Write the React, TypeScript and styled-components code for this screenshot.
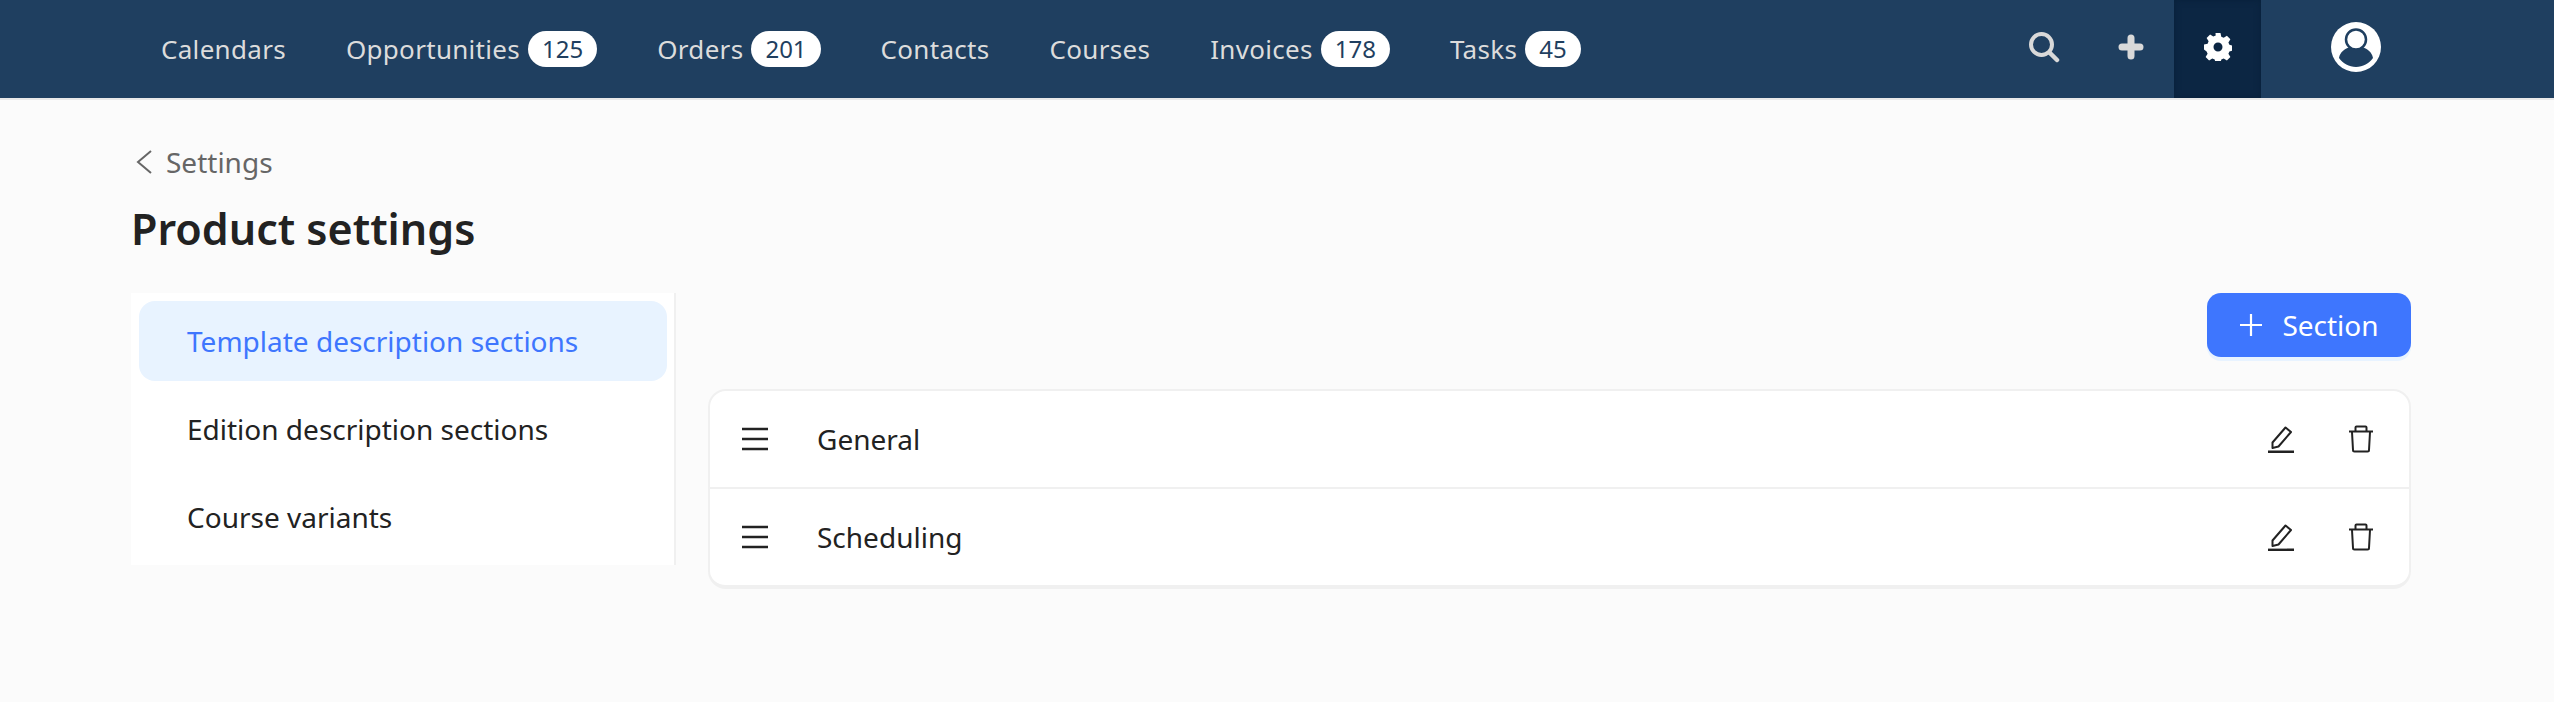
import React from "react";
import styled, { createGlobalStyle } from "styled-components";

const Global = createGlobalStyle`
  html, body { margin: 0; padding: 0; background: #fbfbfb; }
  body { font-family: "Noto Sans", "Open Sans", sans-serif; color: #222; }
`;

const TopBar = styled.header`
  height: 98px;
  background: #1f3f60;
  border-bottom: 2px solid #e9e9e9;
  display: flex;
  align-items: stretch;
  padding-left: 161px;
`;
const NavList = styled.nav`
  display: flex;
  align-items: center;
  gap: 60px;
  flex: 1;
`;
const NavItem = styled.a`
  display: flex;
  align-items: center;
  gap: 8px;
  color: #dcdcdc;
  font-size: 26px;
  letter-spacing: 0.3px;
  white-space: nowrap;
`;
const Badge = styled.span`
  height: 36px;
  padding: 0 14px;
  border-radius: 18px;
  background: #fff;
  color: #1f3f60;
  font-size: 24px;
  letter-spacing: 0;
  line-height: 36px;
`;
const ActionArea = styled.div`
  display: flex;
  align-items: stretch;
  padding-right: 103px;
`;
const IconSlot = styled.div<{ $w: number; $active?: boolean }>`
  width: ${(p) => p.$w}px;
  display: flex;
  align-items: center;
  justify-content: center;
  padding-bottom: 4px;
  box-sizing: border-box;
  background: ${(p) => (p.$active ? "#0c2643" : "transparent")};
  box-shadow: ${(p) => (p.$active ? "inset 0 0 6px #08203a" : "none")};
`;
const Page = styled.main`
  width: 2280px;
  margin-left: 131px;
`;
const Back = styled.div`
  display: flex;
  align-items: center;
  gap: 14px;
  margin: 45px 0 0 5px;
  height: 34px;
  color: #666;
  font-size: 28px;
`;
const Title = styled.h1`
  margin: 20px 0 0;
  font-size: 43px;
  line-height: 60px;
  font-weight: 600;
  color: #222;
`;
const Columns = styled.div`
  display: flex;
  align-items: flex-start;
  gap: 32px;
  margin-top: 34px;
`;
const SideMenu = styled.aside`
  width: 545px;
  height: 272px;
  box-sizing: border-box;
  background: #fff;
  border-right: 2px solid #f0f0f0;
  padding: 8px 7px 0 8px;
  display: flex;
  flex-direction: column;
  gap: 8px;
`;
const MenuItem = styled.div<{ $active?: boolean }>`
  height: 80px;
  flex: none;
  display: flex;
  align-items: center;
  padding-left: 48px;
  border-radius: 16px;
  font-size: 28px;
  background: ${(p) => (p.$active ? "#e8f3ff" : "transparent")};
  color: ${(p) => (p.$active ? "#3e76fe" : "#222")};
`;
const Content = styled.section`
  flex: 1;
  display: flex;
  flex-direction: column;
`;
const Toolbar = styled.div`
  display: flex;
  justify-content: flex-end;
`;
const PrimaryButton = styled.button`
  width: 204px;
  height: 64px;
  border: 0;
  border-radius: 14px;
  background: #3e76fe;
  box-shadow: 0 4px 0 #e8f3ff;
  color: #fff;
  font: inherit;
  font-size: 28px;
  display: flex;
  align-items: center;
  justify-content: center;
  gap: 19px;
  padding: 0;
`;
const Card = styled.div`
  margin-top: 32px;
  box-sizing: border-box;
  border: 2px solid #f0f0f0;
  border-bottom-width: 4px;
  border-radius: 18px;
  background: #fff;
  overflow: hidden;
`;
const Row = styled.div`
  height: 96px;
  display: flex;
  align-items: center;
  padding: 0 8px 0 32px;
  & + & { border-top: 2px solid #f0f0f0; }
`;
const RowName = styled.span`
  flex: 1;
  margin-left: 49px;
  font-size: 28px;
`;
const RowAction = styled.span`
  width: 80px;
  display: flex;
  justify-content: center;
`;

const Burger = () => (
  <svg width="26" height="24" viewBox="0 0 26 24" fill="none" stroke="#222" strokeWidth="2.4">
    <path d="M0 2h26M0 12h26M0 22h26" />
  </svg>
);
const Pencil = () => (
  <svg width="28" height="28" viewBox="0 0 28 28" fill="none" stroke="#222" strokeLinejoin="round">
    <path strokeWidth="2" d="M5.500 17.500 18.500 2.500l5.500 4.500-12.500 14.500-6 1.500z" />
    <path strokeWidth="2.400" d="M1 26.800h26" />
  </svg>
);
const Trash = () => (
  <svg width="26" height="28" viewBox="0 0 26 28" fill="none" stroke="#222" strokeWidth="2" strokeLinejoin="round">
    <path d="M1 6.500h24" />
    <path d="M7.500 6V2.500Q7.500 1.500 8.500 1.500h9q1 0 1 1V6" />
    <path d="M4 7l1 18q0 1.500 1.500 1.500h13q1.500 0 1.500-1.500l1-18" />
  </svg>
);
const Chevron = () => (
  <svg width="16" height="24" viewBox="0 0 16 24" fill="none" stroke="#666" strokeWidth="2">
    <path d="M15 1 2 12l13 11" />
  </svg>
);
const SearchIcon = () => (
  <svg width="32" height="32" viewBox="0 0 32 32" fill="none" stroke="#d9d9d9">
    <circle cx="13.500" cy="13.500" r="10.500" strokeWidth="4" />
    <path d="M21.500 21.500 29 29" strokeWidth="4.500" strokeLinecap="round" />
  </svg>
);
const PlusBold = () => (
  <svg width="26" height="26" viewBox="0 0 26 26" fill="none" stroke="#d9d9d9" strokeWidth="7" strokeLinecap="round">
    <path d="M13 4v18M4 13h18" />
  </svg>
);
const Gear = () => (
  <svg width="28" height="28" viewBox="0 0 28 28">
    <path
      fill="#fff"
      fillRule="evenodd"
      d="M11.500 0h5l.8 3.700 2.400 1 3.200-2 3.500 3.500-2 3.200 1 2.400 3.600.8v5l-3.600.8-1 2.400 2 3.200-3.500 3.500-3.200-2-2.400 1-.8 3.500h-5l-.8-3.500-2.400-1-3.200 2-3.500-3.500 2-3.200-1-2.400L0 16.500v-5l3.600-.8 1-2.400-2-3.200 3.500-3.500 3.200 2 2.400-1zM14 9.500a4.500 4.500 0 1 0 0 9 4.500 4.500 0 0 0 0-9z"
    />
  </svg>
);
const Avatar = () => (
  <svg width="50" height="50" viewBox="0 0 50 50">
    <circle cx="25" cy="25" r="25" fill="#fff" />
    <circle cx="25" cy="17.500" r="10" fill="none" stroke="#1f3f60" strokeWidth="2.500" />
    <path fill="#1f3f60" d="M8 36c1-6 6-9.500 10-10.500 4 2.700 10 2.700 14 0 4 1 9 4.500 10 10.500-4 5.500-10 9-17 9s-13-3.500-17-9z" />
  </svg>
);
const ThinPlus = () => (
  <svg width="24" height="24" viewBox="0 0 24 24" stroke="#fff" strokeWidth="2.200" fill="none">
    <path d="M12 1v22M1 12h22" />
  </svg>
);

const nav: [string, number?][] = [
  ["Calendars"],
  ["Opportunities", 125],
  ["Orders", 201],
  ["Contacts"],
  ["Courses"],
  ["Invoices", 178],
  ["Tasks", 45],
];

export default function App() {
  return (
    <>
      <Global />
      <TopBar>
        <NavList>
          {nav.map(([label, count]) => (
            <NavItem key={label}>
              {label}
              {count !== undefined && <Badge>{count}</Badge>}
            </NavItem>
          ))}
        </NavList>
        <ActionArea>
          <IconSlot $w={88}><SearchIcon /></IconSlot>
          <IconSlot $w={86}><PlusBold /></IconSlot>
          <IconSlot $w={87} $active><Gear /></IconSlot>
          <IconSlot $w={190}><Avatar /></IconSlot>
        </ActionArea>
      </TopBar>
      <Page>
        <Back><Chevron />Settings</Back>
        <Title>Product settings</Title>
        <Columns>
          <SideMenu>
            <MenuItem $active>Template description sections</MenuItem>
            <MenuItem>Edition description sections</MenuItem>
            <MenuItem>Course variants</MenuItem>
          </SideMenu>
          <Content>
            <Toolbar>
              <PrimaryButton><ThinPlus />Section</PrimaryButton>
            </Toolbar>
            <Card>
              {["General", "Scheduling"].map((name) => (
                <Row key={name}>
                  <Burger />
                  <RowName>{name}</RowName>
                  <RowAction><Pencil /></RowAction>
                  <RowAction><Trash /></RowAction>
                </Row>
              ))}
            </Card>
          </Content>
        </Columns>
      </Page>
    </>
  );
}
